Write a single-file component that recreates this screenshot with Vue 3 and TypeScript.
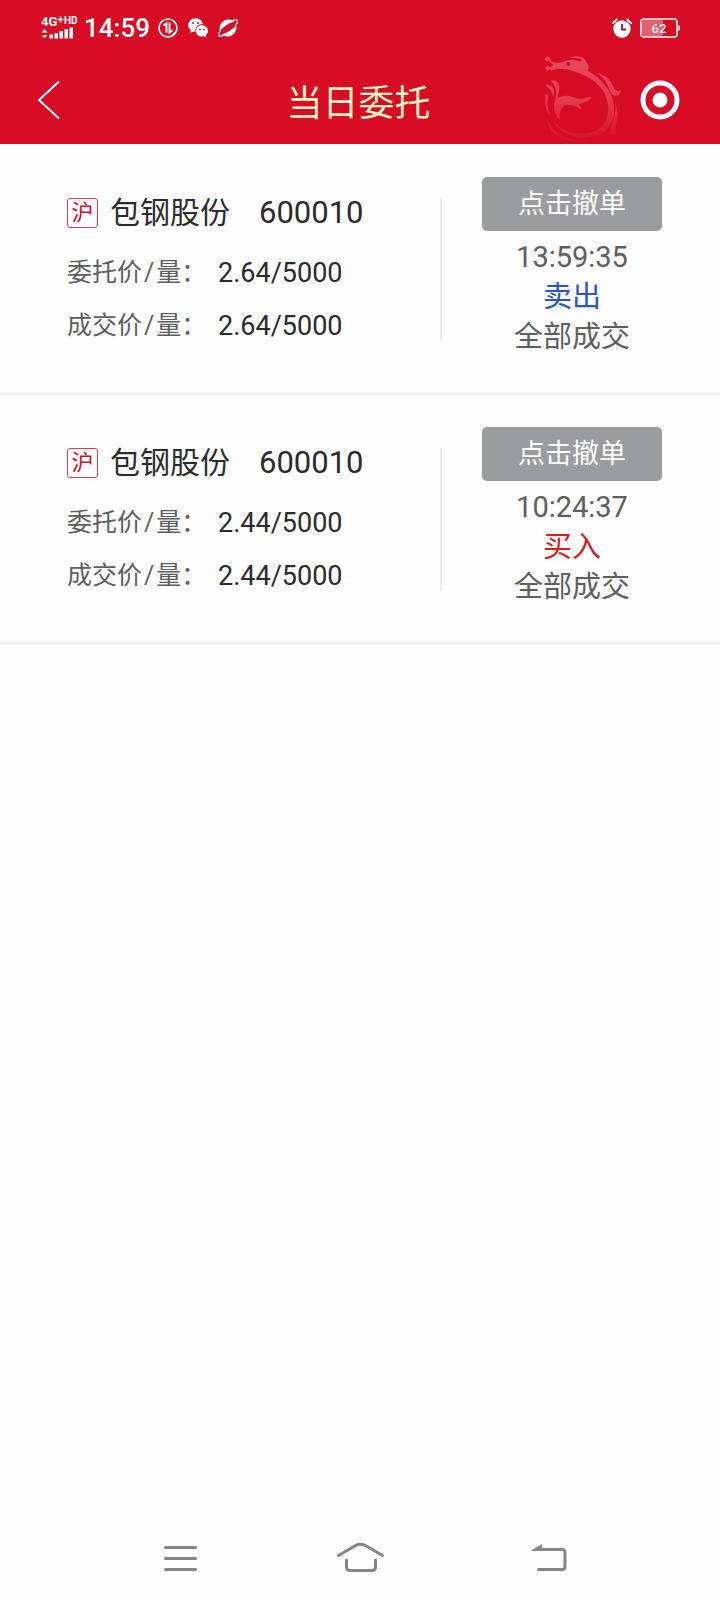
<script setup lang="ts">
interface Order {
  id: number
  market: string
  name: string
  code: string
  orderPrice: string
  dealPrice: string
  time: string
  side: 'buy' | 'sell'
  status: string
}

const orders: Order[] = [
  {
    id: 1,
    market: '沪',
    name: '包钢股份',
    code: '600010',
    orderPrice: '2.64/5000',
    dealPrice: '2.64/5000',
    time: '13:59:35',
    side: 'sell',
    status: '全部成交',
  },
  {
    id: 2,
    market: '沪',
    name: '包钢股份',
    code: '600010',
    orderPrice: '2.44/5000',
    dealPrice: '2.44/5000',
    time: '10:24:37',
    side: 'buy',
    status: '全部成交',
  },
]

const sideText = { buy: '买入', sell: '卖出' }
</script>

<template>
  <div class="page">
    <header class="header">
      <div class="status-bar">
        <div class="status-group">
          <svg class="signal" viewBox="0 0 38 26" aria-hidden="true">
            <text x="0" y="11" font-size="13">4G</text>
            <text x="23" y="9" font-size="10">HD</text>
            <path d="M16.500 4.500h6M19.500 1.500v6" stroke="#fff" stroke-width="1.600" />
            <path d="M0.500 17.500l3-3.500 3 3.500zM0.500 20l3 3.500 3-3.500z" />
            <rect x="8.500" y="19.500" width="3.500" height="4" />
            <rect x="13.500" y="18" width="3.500" height="5.500" />
            <rect x="18.500" y="16" width="3.500" height="7.500" />
            <rect x="23.500" y="14" width="3.500" height="9.500" />
            <rect x="28.500" y="12.500" width="3.500" height="11" />
          </svg>
          <span class="clock">14:59</span>
          <svg class="status-icon" viewBox="0 0 20 20" aria-hidden="true">
            <g fill="none" stroke="#fff" stroke-width="1.600">
              <circle cx="10" cy="10" r="9" />
              <path d="M5.500 7.500l3-2.500v10" stroke-width="1.900" />
              <path d="M11.500 4.500v10l3-2.500" stroke-width="1.900" />
            </g>
            <path d="M12 18.500l6-6-1 3.500-2 2z" />
          </svg>
          <svg class="status-icon" viewBox="0 0 20 20" aria-hidden="true">
            <path d="M7.500 0.300C3.400 0.300.2 3.200.2 6.900c0 2.200 1 4 2.700 5.200L2.200 15l2.900-1.600c.7.2 1.500.3 2.300.3C6.800 9.500 9.800 6.300 14.900 6 14.200 2.700 11.200.3 7.500.3z" />
            <path d="M14 7.200c-3.400 0-6.200 2.500-6.200 5.700s2.800 5.700 6.200 5.700c.7 0 1.300-.1 1.900-.3l2.500 1.400-.6-2.400c1.400-1 2.200-2.600 2.200-4.400C20 9.700 17.400 7.200 14 7.200z" />
            <g fill="#d70c24">
              <circle cx="5" cy="5" r="1" />
              <circle cx="10" cy="5" r="1" />
              <circle cx="12" cy="11.500" r="0.900" />
              <circle cx="16" cy="11.500" r="0.900" />
            </g>
          </svg>
          <svg class="status-icon" viewBox="0 0 20 20" aria-hidden="true">
            <path d="M1.800 13C0.600 7 4.500 1.800 10 1.500c2.500-.1 4.600.7 6 2.200C11 5 5.500 8.500 1.800 13z" />
            <path d="M18.200 7c1.200 6-2.700 11.200-8.200 11.500-2.500.1-4.600-.7-6-2.200C9 15 14.500 11.500 18.200 7z" />
            <path d="M2.500 12C.8 14.800.1 17 1 18c.8.700 2.500.2 4.500-.8M14.500 2.800c2.300-1.100 4-1.500 4.700-.7.700.9 0 2.900-1.500 5.400" fill="none" stroke="#fff" stroke-width="1.300" />
          </svg>
        </div>
        <div class="status-group power">
          <svg class="status-icon" viewBox="0 0 20 20" aria-hidden="true">
            <path d="M1 5l4-3.500M19 5l-4-3.500" stroke="#fff" stroke-width="2" stroke-linecap="round" />
            <circle cx="10" cy="11" r="8.700" />
            <path d="M10 6v5.500h4" fill="none" stroke="#a80d20" stroke-width="1.800" />
          </svg>
          <svg class="battery" viewBox="0 0 40 20" aria-label="62%">
            <rect x="2" y="2" width="21" height="16" rx="2" fill-opacity="0.350" />
            <rect x="1" y="1" width="36" height="18" rx="3" fill="none" stroke="#fff" stroke-width="1.600" />
            <path d="M39 7.500v5" stroke="#fff" stroke-width="1.500" />
            <text x="19" y="14.500" font-size="13" text-anchor="middle">62</text>
          </svg>
        </div>
      </div>
      <div class="title-bar">
        <button class="icon-button back" type="button" aria-label="返回">
          <svg viewBox="0 0 24 40"><path d="M22 1.500L2 20l20 18.500" fill="none" stroke="#fff" stroke-width="2" /></svg>
        </button>
        <h1>当日委托</h1>
        <div class="title-end">
          <svg class="dragon" viewBox="60 18 261 264" aria-hidden="true">
            <defs>
              <linearGradient id="dragonFade" gradientUnits="userSpaceOnUse" x1="0" y1="18" x2="0" y2="272">
                <stop offset="0" stop-color="#e84a5c" />
                <stop offset="0.500" stop-color="#e33c50" />
                <stop offset="1" stop-color="#d8112a" />
              </linearGradient>
            </defs>
            <g fill="url(#dragonFade)">
              <circle cx="82" cy="27" r="7" />
              <circle cx="83" cy="55" r="7" />
              <path d="M80 24l8 0 8 12q20 6 38-2 22-10 42 0 8 2 10-6-14-6-38-4 16-10 38-2 10 5 13 15 12 12 4 25 30 15 49 41 32 34 30 82-3 52-50 71-37 13-76 1-41-15-58-45 26 28 62 37 46 9 80-14 25-22 25-62-3-46-38-76-30-23-68-34-20-8-48-7l-17 6-6-8 12-8z" />
              <path d="M231 68q37 10 49 42 5 13 14 14 5-1 8-5 2 14-12 18-16 2-22-18-8-29-37-51z" />
              <path d="M94 96q-3-5 4-5 17 2 20 17 1 17-6 37 21-13 46-4 23 9 37 3 9-4 17-4 3 8-15 15l-17 6q-8 1 0 6 7 7 2 12-8-9-26-13-22-6-32 10-8 14-4 35-20-18-18-48 7-23 6-38-1-20-14-29z" />
              <path d="M78 108q-2-5 4-4 18 3 20 16 0 10-3 20-5-21-21-32z" />
              <path d="M74 134q10-4 11 8-8 27 6 53-18-16-15-43 3-11-2-18z" />
              <path d="M84 213q9 25 42 45 31 15 76 16-37 6-73-7-48-22-45-54z" />
              <path d="M286 160q11 27 4 52-8 25-3 33 3 8-9 12-13-7-3-34 15-35 11-63z" />
            </g>
            <circle cx="145" cy="42" r="6" fill="#c90c22" />
          </svg>
          <button class="icon-button target" type="button" aria-label="更多">
            <svg viewBox="0 0 40 40">
              <circle cx="20" cy="20" r="17" fill="none" stroke="#fff" stroke-width="5" />
              <circle cx="20" cy="20" r="7.500" fill="#fff" />
            </svg>
          </button>
        </div>
      </div>
    </header>

    <main class="orders">
      <article v-for="order in orders" :key="order.id" class="order">
        <section class="detail">
          <h2 class="stock">
            <span class="market">{{ order.market }}</span>
            <span class="name">{{ order.name }}</span>
            <span class="code">{{ order.code }}</span>
          </h2>
          <dl class="prices">
            <dt>委托价<i>/</i>量：</dt>
            <dd>{{ order.orderPrice }}</dd>
            <dt>成交价<i>/</i>量：</dt>
            <dd>{{ order.dealPrice }}</dd>
          </dl>
        </section>
        <section class="state">
          <button class="cancel" type="button">点击撤单</button>
          <time>{{ order.time }}</time>
          <span :class="order.side">{{ sideText[order.side] }}</span>
          <span>{{ order.status }}</span>
        </section>
      </article>
    </main>

    <nav class="system-nav">
      <button class="icon-button" type="button" aria-label="菜单">
        <svg viewBox="0 0 60 60"><path d="M15.500 19.500h30M15.500 30.500h30M15.500 41.500h30" /></svg>
      </button>
      <button class="icon-button" type="button" aria-label="主页">
        <svg viewBox="0 0 60 60">
          <path d="M8.500 27.500l17-10q5-2.500 10 0l17 10" />
          <path d="M16.500 32v7q0 3.500 3.500 3.500h22q3.500 0 3.500-3.500v-7" />
        </svg>
      </button>
      <button class="icon-button" type="button" aria-label="后退">
        <svg viewBox="0 0 60 60">
          <path d="M28 21.500h24q3 0 3 3v14q0 3-3 3H28.500" />
          <path class="solid" d="M22 22l10-6v7H22z" />
        </svg>
      </button>
    </nav>
  </div>
</template>

<style>
body {
  margin: 0;
}
</style>

<style scoped>
.page {
  display: flex;
  flex-direction: column;
  min-height: 100vh;
  background: #fefefe;
  color: #5e5e5e;
  font-family: Roboto, "Noto Sans CJK SC", sans-serif;
}

button {
  padding: 0;
  border: 0;
  font: inherit;
}

.icon-button {
  display: flex;
  background: none;
}

.header {
  background: #d70c24;
  color: #fff;
}

.status-bar {
  display: flex;
  align-items: center;
  justify-content: space-between;
  height: 56px;
  padding: 0 40px 0 41px;
}

.status-bar svg {
  fill: #fff;
}

.status-group {
  display: flex;
  align-items: center;
  gap: 10px;
}

.status-group.power {
  gap: 8px;
}

.signal {
  width: 38px;
  height: 26px;
  font-weight: 700;
}

.clock {
  margin: 0 -2px 0 -5px;
  font-size: 26px;
  font-weight: 500;
  line-height: 32px;
}

.status-icon {
  width: 20px;
  height: 20px;
}

.battery {
  width: 40px;
  height: 20px;
  font-weight: 500;
}

.title-bar {
  display: grid;
  grid-template-columns: 1fr auto 1fr;
  align-items: center;
  padding: 0 40px 0 37px;
}

.back svg {
  width: 24px;
  height: 40px;
}

h1 {
  margin: 0;
  padding-top: 8px;
  color: #fff0c8;
  font-size: 36px;
  font-weight: 400;
  line-height: 52px;
}

.title-end {
  display: flex;
  align-items: center;
  justify-content: flex-end;
  gap: 13px;
}

.dragon {
  width: 87px;
  height: 88px;
}

.target svg {
  width: 40px;
  height: 40px;
}

.order {
  display: flex;
  align-items: flex-start;
  gap: 40px;
  padding: 33px 58px 36px 67px;
  border-bottom: 1px solid #e6e6e6;
}

.detail {
  flex: 1;
  margin-top: 21px;
  border-right: 2px solid #ececec;
}

.stock {
  display: flex;
  align-items: center;
  margin: 0 0 31px;
  color: #2b2b2b;
  font-size: 30px;
  font-weight: 400;
  line-height: 30px;
}

.market {
  box-sizing: border-box;
  width: 31px;
  margin-right: 12px;
  border: 1px solid #d0405a;
  border-radius: 3px;
  color: #c4142c;
  font-size: 22px;
  line-height: 28px;
  text-align: center;
}

.code {
  margin-left: 29px;
  font-size: 31px;
}

.prices {
  display: grid;
  grid-template-columns: 151px 1fr;
  row-gap: 25px;
  margin: 0;
  line-height: 28px;
}

dt {
  font-size: 25px;
  white-space: nowrap;
}

dt i {
  padding: 0 2px;
  font-style: normal;
}

dd {
  margin: 0;
  color: #2b2b2b;
  font-size: 27px;
}

.state {
  display: flex;
  flex-direction: column;
  align-items: center;
  width: 180px;
  font-size: 29px;
  line-height: 40px;
}

.cancel {
  width: 100%;
  margin-bottom: 6px;
  border-radius: 5px;
  background: #9b9ca0;
  color: #fff;
  font-size: 27px;
  line-height: 54px;
}

.sell {
  color: #2a52cc;
}

.buy {
  color: #d3201c;
}

.system-nav {
  display: flex;
  justify-content: space-around;
  margin-top: auto;
  padding: 12px 90px;
}

.system-nav svg {
  width: 60px;
  height: 60px;
  fill: none;
  stroke: #858585;
  stroke-width: 3;
  stroke-linecap: round;
}

.system-nav .solid {
  fill: #858585;
  stroke: none;
}
</style>
